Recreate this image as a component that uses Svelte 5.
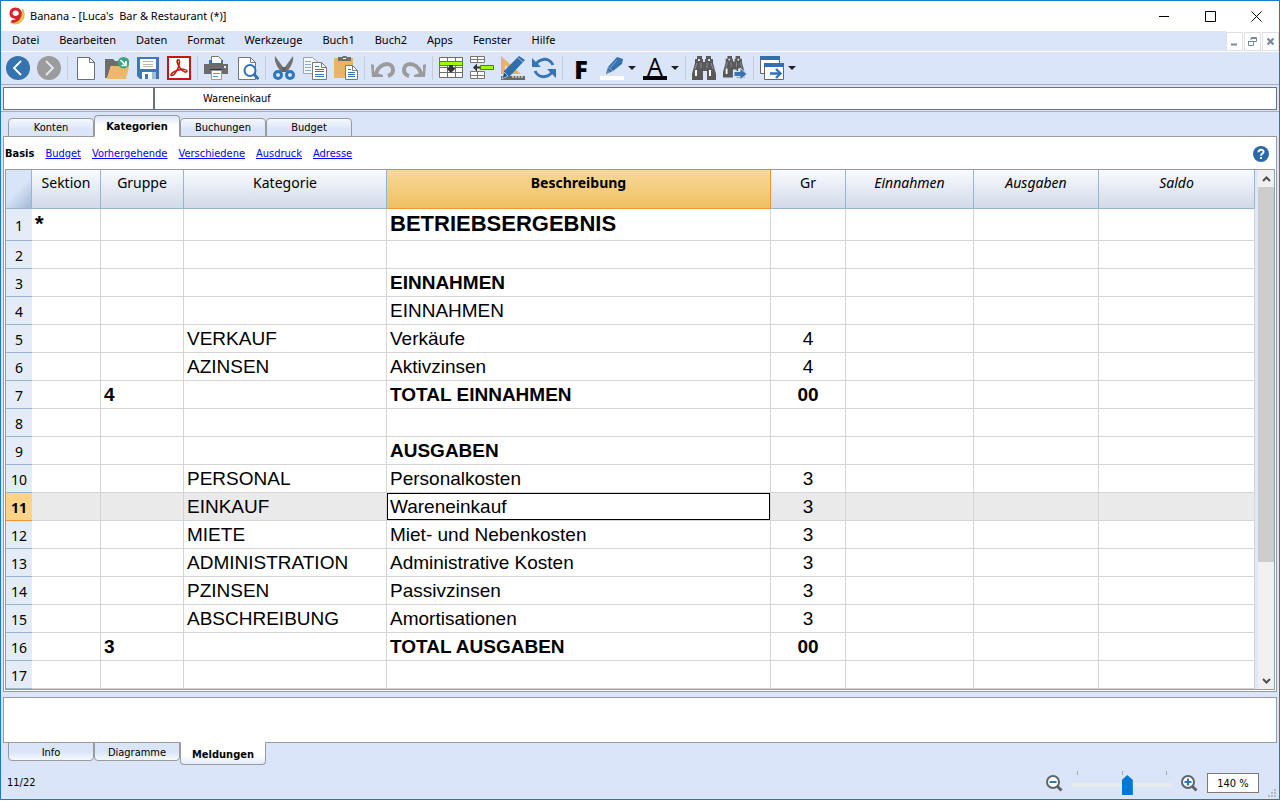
<script>
  const menus = ['Datei', 'Bearbeiten', 'Daten', 'Format', 'Werkzeuge', 'Buch1', 'Buch2', 'Apps', 'Fenster', 'Hilfe'];
  const sheets = ['Konten', 'Kategorien', 'Buchungen', 'Budget'];
  const views = ['Budget', 'Vorhergehende', 'Verschiedene', 'Ausdruck', 'Adresse'];
  const panels = ['Info', 'Diagramme', 'Meldungen'];
  const tools = [
    { id: 'back', label: 'Zurück' }, { id: 'forward', label: 'Vorwärts' }, null,
    { id: 'new', label: 'Neu' }, { id: 'open', label: 'Öffnen' }, { id: 'save', label: 'Speichern' }, { id: 'pdf', label: 'PDF erstellen' }, null,
    { id: 'print', label: 'Drucken' }, { id: 'preview', label: 'Vorschau' }, null,
    { id: 'cut', label: 'Ausschneiden' }, { id: 'copy', label: 'Kopieren' }, { id: 'paste', label: 'Einfügen' }, null,
    { id: 'undo', label: 'Rückgängig' }, { id: 'redo', label: 'Wiederherstellen' }, null,
    { id: 'addrow', label: 'Zeilen hinzufügen' }, { id: 'delrow', label: 'Zeilen löschen' }, { id: 'design', label: 'Spalten einrichten' }, { id: 'refresh', label: 'Neu berechnen' }, null,
    { id: 'bold', label: 'Fett' }, { id: 'marker', label: 'Hintergrundfarbe', menu: true }, { id: 'color', label: 'Schriftfarbe', menu: true }, null,
    { id: 'find', label: 'Suchen' }, { id: 'findnext', label: 'Weitersuchen' }, null,
    { id: 'windows', label: 'Fenster wechseln', menu: true }
  ];
  const columns = [
    { name: 'Sektion', cls: 'c-sec' }, { name: 'Gruppe', cls: 'c-grp' }, { name: 'Kategorie', cls: 'c-cat' },
    { name: 'Beschreibung', cls: 'c-desc', current: true }, { name: 'Gr', cls: 'c-gr' },
    { name: 'Einnahmen', cls: 'c-in', amount: true }, { name: 'Ausgaben', cls: 'c-out', amount: true }, { name: 'Saldo', cls: 'c-bal', amount: true }
  ];
  const rows = [
    { sec: '*', desc: 'BETRIEBSERGEBNIS', style: 'title' },
    {},
    { desc: 'EINNAHMEN', style: 'bold' },
    { desc: 'EINNAHMEN' },
    { cat: 'VERKAUF', desc: 'Verkäufe', gr: '4' },
    { cat: 'AZINSEN', desc: 'Aktivzinsen', gr: '4' },
    { grp: '4', desc: 'TOTAL EINNAHMEN', gr: '00', style: 'bold' },
    {},
    { desc: 'AUSGABEN', style: 'bold' },
    { cat: 'PERSONAL', desc: 'Personalkosten', gr: '3' },
    { cat: 'EINKAUF', desc: 'Wareneinkauf', gr: '3', style: 'current' },
    { cat: 'MIETE', desc: 'Miet- und Nebenkosten', gr: '3' },
    { cat: 'ADMINISTRATION', desc: 'Administrative Kosten', gr: '3' },
    { cat: 'PZINSEN', desc: 'Passivzinsen', gr: '3' },
    { cat: 'ABSCHREIBUNG', desc: 'Amortisationen', gr: '3' },
    { grp: '3', desc: 'TOTAL AUSGABEN', gr: '00', style: 'bold' },
    {}
  ];
  let zoom = $state(140);
</script>

{#snippet binoculars()}
  <path d="M5 0h5v3h1v3h2V3h1V0h5v3h2v4l3 11v6h-9v-9h-3v0h-1v9H0v-6L3 7V3h2z" fill="#595959" />
  <path d="M6 3h2v2H6zM16 3h2v2h-2z" fill="#dbe5f8" />
  <path d="M5 7l-2 6M9 7v5M15 7v5M19 7l2 6" stroke="#8d929b" stroke-width="1" />
  <path d="M4 14v6M18 14v6" stroke="#fff" stroke-width="2" />
{/snippet}

{#snippet icon(id)}
  <svg width="24" height="24" viewBox="0 0 24 24" fill="none" aria-hidden="true">
    {#if id === 'back'}
      <circle cx="12" cy="12" r="12" fill="#3572b0" />
      <path d="M15 5l-7 7 7 7" stroke="#fff" stroke-width="1.8" />
    {:else if id === 'forward'}
      <circle cx="12" cy="12" r="12" fill="#9c9c9c" />
      <path d="M9 5l7 7-7 7" stroke="#e4eaf5" stroke-width="1.8" />
    {:else if id === 'new'}
      <path d="M3.5 1.5h12l5 5v17h-17z" fill="#fff" stroke="#6e6e6e" />
      <path d="M15.5 1.5v5h5" stroke="#6e6e6e" />
    {:else if id === 'open'}
      <path d="M0 22V3h8l2 2h5v6H6L2 22z" fill="#6d6d6d" />
      <path d="M2 23L5.5 10h8l2-2h8.5v3l-3 12z" fill="#eeb76a" />
      <circle cx="18.5" cy="6.7" r="5.8" fill="#37a57d" />
      <path d="M15.5 4l5 5M21 5v4.5h-4.5" stroke="#fff" stroke-width="1.7" />
    {:else if id === 'save'}
      <path d="M1 1h22v22H4l-3-3z" fill="#3d79ba" />
      <path d="M4 3h16v10H4z" fill="#fff" />
      <path d="M7 5.5h10M7 8.5h10M7 10.5h10" stroke="#b7b7b7" />
      <path d="M6 16h14v7H6z" fill="#fff" />
      <path d="M9 18h3v5H9z" fill="#3d79ba" /><path d="M16 16h4v7h-4z" fill="#9fbddd" />
    {:else if id === 'pdf'}
      <path d="M1 1h22v22H1z" fill="#fff" stroke="#c5160f" stroke-width="2" />
      <path d="M10.5 4c3-1 2 4 1 7-2 5-5 8.500-7 8.500-2-1 2-4 7-5.500 4-1 8-1 8.500 1 0 2-4 1-7-3-2-3-3.500-7-2.500-8z" stroke="#c5160f" stroke-width="1.5" />
    {:else if id === 'print'}
      <path d="M7.500.5h7l3 3v5h-10z" fill="#fff" stroke="#777" />
      <path d="M5 4h3v3h10V4h1v5H5z" fill="#3575b5" />
      <path d="M0 8h24v10H0z" fill="#6b6b6b" />
      <path d="M20 10h2v2h-2z" fill="#eee" /><path d="M6 13h12v1H6z" fill="#333" />
      <path d="M7.500 14.500h10v9h-10z" fill="#fff" stroke="#999" />
      <path d="M9 17.500h7M9 20.500h5" stroke="#5a96cf" />
    {:else if id === 'preview'}
      <path d="M3.500 1.500h12l5 5v17h-17z" fill="#fff" stroke="#777" />
      <path d="M15.500 1.500v5h5" stroke="#777" />
      <circle cx="15" cy="14.500" r="5.500" fill="#fff" stroke="#2e73b7" stroke-width="2" />
      <path d="M19 18.500l4.500 4.500" stroke="#2e73b7" stroke-width="3" />
    {:else if id === 'cut'}
      <path d="M3 0l8 11 0 4-2 1C5 11 2 5 3 0zM21 0l-8 11 0 4 2 1c4-5 7-11 6-16z" fill="#727272" />
      <path d="M10 11h4v5h-4z" fill="#636363" />
      <circle cx="6" cy="19" r="3.500" stroke="#2c76bc" stroke-width="3" /><circle cx="18" cy="19" r="3.500" stroke="#2c76bc" stroke-width="3" />
    {:else if id === 'copy'}
      <path d="M.5 1.500h9l5 4v12H.5z" fill="#f4f7fc" stroke="#a4a4a4" />
      <path d="M2 5.500h6M2 8.500h6M2 11.500h6M2 14.500h6" stroke="#85acd5" />
      <path d="M9.500 6.500h9l5 5v12h-14z" fill="#fff" stroke="#777" /><path d="M18.500 6.500v5h5" stroke="#777" />
      <path d="M12 10.500h4M12 13.500h9M12 15.500h9M12 18.500h9M12 20.500h9" stroke="#3575b5" />
    {:else if id === 'paste'}
      <path d="M0 2h19v20H0z" fill="#e9b466" /><path d="M4 1h4l1-1h3l1 1h4v4H4z" fill="#6e6e6e" /><path d="M9 2h3v1H9z" fill="#fff" />
      <path d="M11.500 9.500h7l5 5v9h-12z" fill="#fff" stroke="#777" /><path d="M18.500 9.500v5h5" stroke="#777" />
      <path d="M14 13.500h3M14 16.500h7M14 18.500h7M14 20.500h7" stroke="#3575b5" />
    {:else if id === 'undo' || id === 'redo'}
      <g transform={id === 'redo' ? 'matrix(-1 0 0 1 24 0)' : undefined}>
        <path d="M5 17C7 11 12 8 16 8c4 0 6 3 6 6s-2 5-5 6" stroke="#9b9b9b" stroke-width="4" />
        <path d="M0 8l3 1v7l9 3v2H1z" fill="#9b9b9b" />
      </g>
    {:else if id === 'addrow'}
      <path d="M.5 1.500h23v20H.5z" fill="#fff" stroke="#6e6e66" />
      <path d="M8.500 1v21M16.500 1v21M1 11.500h23M1 16.500h23" stroke="#6e6e66" />
      <path d="M.5 5.500h23v4H.5z" fill="#9cff00" stroke="#568d00" />
      <path d="M10 9h4v3h2v1l-4 4-4-4v-1h2z" fill="#333" />
    {:else if id === 'delrow'}
      <path d="M.5.5h14v6H.5zM.5 15.500h14v7H.5z" fill="#fff" stroke="#77776d" /><path d="M7.500 0v7M7.500 15v8M1 3.500h13M1 19.500h13" stroke="#77776d" />
      <path d="M10.500 9.500h13v4h-13z" fill="#9cff00" stroke="#517c0c" /><path d="M3 11.500l4-4v3h3v2H7v3z" fill="#333" />
    {:else if id === 'design'}
      <path d="M0 0l20 18H0z" fill="#e7b36b" /><path d="M4 9l6 6H4z" fill="#dbe5f8" />
      <path d="M0 20h24v4H0z" fill="#686868" /><path d="M12 20v2M15 20v2M18 20v2M21 20v2" stroke="#fff" />
      <path d="M1 23l2-8L18 0l6 4L9 20z" fill="#2d6eae" /><path d="M1 23l2-7 4 4zM17 2l5 4" fill="#205184" stroke="#dbe5f8" stroke-width=".7" />
    {:else if id === 'refresh'}
      <path d="M3 11a9.500 9.500 0 0 1 18-2M21 13a9.500 9.500 0 0 1-18 2" stroke="#3575b5" stroke-width="3" />
      <path d="M0 2v9h9l-3-3-3-3zM24 22v-9h-9l3 3 3 3z" fill="#3575b5" />
    {:else if id === 'marker'}
      <path d="M6 18l2-7 9-10 6 2-1 5-9 7z" fill="#3572b0" /><path d="M8 11l5 4M17 4l-7 8" stroke="#7aa8d4" /><path d="M6 18l1-4 3 2z" fill="#888" />
      <path d="M0 20h24v4H0z" fill="#fff" />
    {:else if id === 'find'}
      {@render binoculars()}
    {:else if id === 'findnext'}
      <g transform="scale(.9)">{@render binoculars()}</g>
      <path d="M11 15.500h6V12l7 6-7 6v-3.500h-6z" fill="#3575b5" stroke="#dbe5f8" />
    {:else if id === 'windows'}
      <path d="M.5.5h19v17H.5z" fill="#fff" stroke="#666" /><path d="M0 0h20v4H0z" fill="#2e70b1" />
      <path d="M4.500 7.500h19v16h-19z" fill="#fff" stroke="#666" /><path d="M4 7h20v4H4z" fill="#2e70b1" />
      <path d="M10 17.500h10M16 13l4.500 4.500L16 22" stroke="#3575b5" stroke-width="2.400" />
    {/if}
  </svg>
{/snippet}

{#snippet magnifier(plus)}
  <svg width="17" height="17" viewBox="0 0 17 17" fill="none" aria-hidden="true">
    <circle cx="7" cy="7" r="6" fill="#fff" stroke="#5f6368" stroke-width="2" />
    <path d="M11.500 11.500l4 4" stroke="#5f6368" stroke-width="3" />
    <path d={plus ? 'M3.500 7h7M7 3.500v7' : 'M3.500 7h7'} stroke="#3575b5" stroke-width="2" />
  </svg>
{/snippet}

<div class="window">
  <header class="titlebar">
    <svg class="logo" width="16" height="18" viewBox="0 0 16 18" fill="none" aria-hidden="true">
      <path d="M13.500 2c4 6 1 14-7 15-2 0-4-1-5-2 7 0 11-5 12-13z" fill="#f2cf43" stroke="#a88a2b" stroke-width=".5" />
      <path d="M10.500 9C7 12 2 10 2 6.500 2 3.500 4 2 6.500 2c4 0 5.500 3 4.500 6.500-1 4-3.500 6-8.500 6" stroke="#d8202a" stroke-width="3" />
    </svg>
    <h1>Banana - [Luca's&nbsp; Bar &amp; Restaurant (*)]</h1>
    <div class="controls">
      <button aria-label="Minimieren"><svg width="11" height="11" viewBox="0 0 11 11"><path d="M0 5.500h10" stroke="#000" /></svg></button>
      <button aria-label="Maximieren"><svg width="11" height="11" viewBox="0 0 11 11"><path d="M.5.5h10v10h-10z" fill="none" stroke="#000" /></svg></button>
      <button aria-label="Schliessen"><svg width="11" height="11" viewBox="0 0 11 11"><path d="M.5.5l10 10M10.500.5l-10 10" stroke="#000" /></svg></button>
    </div>
  </header>

  <div class="menubar">
    <nav>
      {#each menus as menu}<button>{menu}</button>{/each}
    </nav>
    <div class="doc-controls">
      <button aria-label="Dokument minimieren"><svg width="9" height="9" viewBox="0 0 9 9"><path d="M1 7.500h6" stroke="#77889c" stroke-width="2" /></svg></button>
      <button aria-label="Dokument wiederherstellen"><svg width="9" height="9" viewBox="0 0 9 9" fill="none" stroke="#77889c"><path d="M3 .5h5.500v4H6M3 1.500h5M3 1v2M.5 4v4.500h5V4M0 4.500h6" /></svg></button>
      <button aria-label="Dokument schliessen"><svg width="9" height="9" viewBox="0 0 9 9"><path d="M1.500 1.500l6 6M7.500 1.500l-6 6" stroke="#77889c" stroke-width="2.200" /></svg></button>
    </div>
  </div>

  <div class="toolbar" role="toolbar">
    {#each tools as tool}
      {#if tool}
        <button class="tool" aria-label={tool.label}>
          {#if tool.id === 'bold'}<span class="letter heavy">F</span>
          {:else if tool.id === 'color'}<span class="letter underlined">A</span>
          {:else}{@render icon(tool.id)}{/if}
          {#if tool.menu}<i class="caret"></i>{/if}
        </button>
      {:else}
        <span class="separator"></span>
      {/if}
    {/each}
  </div>

  <div class="editbar">
    <input class="address" type="text" aria-label="Adresse" />
    <input class="formula" type="text" aria-label="Zelleninhalt" value="Wareneinkauf" />
  </div>

  <div class="tabs top">
    {#each sheets as sheet}<button class:active={sheet === 'Kategorien'}>{sheet}</button>{/each}
  </div>

  <main>
    <div class="views">
      <b>Basis</b>
      {#each views as view}<a href="#{view}">{view}</a>{/each}
      <button class="help" aria-label="Hilfe">
        <svg width="16" height="16" viewBox="0 0 16 16" fill="none" aria-hidden="true">
          <circle cx="8" cy="8" r="8" fill="#2868ab" />
          <path d="M5.500 6.200C5.500 2.800 10.600 3 10.600 5.800 10.600 7.600 8 7.600 8 9.800M8 11v2" stroke="#fff" stroke-width="2" />
        </svg>
      </button>
    </div>
    <div class="sheet">
      <table>
        <colgroup>
          <col class="c-num" />
          {#each columns as column}<col class={column.cls} />{/each}
        </colgroup>
        <thead>
          <tr>
            <th class="corner" aria-label="Alles auswählen"></th>
            {#each columns as column}
              <th scope="col" class:picked={column.current} class:amount={column.amount}>{column.name}</th>
            {/each}
          </tr>
        </thead>
        <tbody>
          {#each rows as row, i}
            <tr class={row.style}>
              <th scope="row">{i + 1}</th>
              <td>{row.sec ?? ''}</td>
              <td>{row.grp ?? ''}</td>
              <td>{row.cat ?? ''}</td>
              <td class="desc">{row.desc ?? ''}</td>
              <td class="center">{row.gr ?? ''}</td>
              <td></td>
              <td></td>
              <td></td>
            </tr>
          {/each}
        </tbody>
      </table>
      <div class="scrollbar">
        <button aria-label="Nach oben"><svg width="9" height="6" viewBox="0 0 9 6"><path d="M1 5l3.500-3.500L8 5" fill="none" stroke="#505050" stroke-width="2" /></svg></button>
        <div class="handle"></div>
        <div class="rest"></div>
        <button aria-label="Nach unten"><svg width="9" height="6" viewBox="0 0 9 6"><path d="M1 1l3.500 3.500L8 1" fill="none" stroke="#505050" stroke-width="2" /></svg></button>
      </div>
    </div>
  </main>

  <section class="messages" aria-label="Meldungen"></section>
  <div class="tabs bottom">
    {#each panels as panel}<button class:active={panel === 'Meldungen'}>{panel}</button>{/each}
  </div>

  <footer>
    <span class="position">11/22</span>
    <button class="zoom" aria-label="Verkleinern">{@render magnifier(false)}</button>
    <div class="slider">
      <div class="ticks"><i></i><i></i><i></i></div>
      <input type="range" min="0" max="250" aria-label="Zoom" bind:value={zoom} />
    </div>
    <button class="zoom" aria-label="Vergrössern">{@render magnifier(true)}</button>
    <input class="percent" type="text" aria-label="Zoom in Prozent" value="{zoom} %" />
    <svg class="grip" width="8" height="8" viewBox="0 0 8 8" fill="#b4b8c0" aria-hidden="true"><path d="M6 0h2v2H6zM3 3h2v2H3zM6 3h2v2H6zM0 6h2v2H0zM3 6h2v2H3zM6 6h2v2H6z" /></svg>
  </footer>
</div>

<style>
  :global(body) { margin: 0; background: #fff; }
  .window {
    --ui: 'Noto Sans', 'Open Sans', sans-serif;
    --small: 'DejaVu Sans Condensed', 'DejaVu Sans', sans-serif;
    box-sizing: border-box;
    min-height: calc(100vh - 1px);
    display: flex;
    flex-direction: column;
    border: 1px solid #1979ca;
    background: #dbe5f9;
    color: #000;
    font: 11px/14px var(--small);
  }
  .window *, .window *::before { box-sizing: border-box; }
  button { margin: 0; padding: 0; border: 0; background: none; color: inherit; font: inherit; }
  input { margin: 0; color: inherit; font: inherit; border-radius: 0; }
  svg { display: block; flex: none; }

  .titlebar { display: flex; align-items: center; height: 30px; padding-left: 8px; background: #fff; }
  h1 { margin: 0 0 0 5px; font: 400 11px/16px var(--ui); }
  .controls { display: flex; margin-left: auto; }
  .controls button { width: 46px; height: 30px; display: grid; place-items: center; }

  .menubar { display: flex; justify-content: space-between; height: 21px; border-bottom: 1px solid #fff; }
  nav { display: flex; align-items: center; gap: 20px; padding: 0 0 2px 11px; font: 11px/16px var(--ui); }
  .doc-controls { display: flex; gap: 1px; background: #fff; }
  .doc-controls button { width: 17px; height: 19px; margin-top: 1px; display: grid; place-items: center; border: 1px solid #e0e0e0; background: #fff; }

  .toolbar { display: flex; align-items: center; height: 33px; padding-left: 2px; border-bottom: 1px solid #a9aeb8; }
  .tool { display: flex; align-items: center; flex: none; height: 30px; padding: 0 4px 0 3px; }
  .separator { flex: none; width: 6px; height: 24px; border-left: 1px solid #c9ccd2; margin-left: 2px; margin-right: -2px; }
  .letter { width: 24px; height: 24px; font: 700 25px/24px 'Open Sans', sans-serif; text-align: center; }
  .underlined { font-weight: 400; border-bottom: 4px solid #000; line-height: 20px; }
  .heavy { font-weight: 800; line-height: 26px; }
  .caret { width: 8px; margin: 0 0 0 4px; border: 4px solid transparent; border-top-color: #222; border-bottom: 0; }

  .editbar { display: flex; margin-top: 1px; padding: 1px 2px; border-bottom: 1px solid #a9aeb8; }
  .editbar input { height: 23px; border: 1px solid #6d717a; background: #fff; outline: 0; }
  .address { width: 150px; flex: none; padding: 0 4px; }
  .formula { flex: 1; min-width: 0; padding: 0 48px; }
  .editbar .address { border-right-width: 0; }
  .editbar .formula { border-left-width: 2px; }

  .tabs { display: flex; padding-left: 7px; position: relative; }
  .tabs button { width: 86px; height: 19px; border: 1px solid #9a9a9a; background: linear-gradient(#f6f9ff, #dbe5f9 60%); }
  .tabs .active { height: 22px; font-weight: 700; background: #fff; }
  .top { height: 25px; padding-top: 3px; align-items: flex-end; margin-bottom: -1px; }
  .top button { border-bottom-color: #9a9a9a; border-radius: 4px 4px 0 0; }
  .top .active { padding-top: 2px; border-bottom-color: #fff; background: linear-gradient(#dce6f9, #fff 50%); }
  .bottom { height: 23px; align-items: flex-start; margin-top: -1px; }
  .bottom button { padding-top: 2px; border-radius: 0 0 4px 4px; background: linear-gradient(#dbe5f9 50%, #f6f9ff); }
  .bottom .active { height: 23px; border-top-color: #fff; background: linear-gradient(#fff 60%, #e3ebfa); }

  main { margin: 0 2px; padding: 0 1px 1px; border: 1px solid #9a9a9a; background: #fff; }
  .views { display: flex; align-items: center; gap: 11px; height: 32px; padding-top: 2px; }
  .views a { color: #00f; text-decoration: underline; }
  .help { margin: 0 6px 0 auto; }
  .sheet { display: flex; border: 1px solid #9a9a9a; }

  table { flex: 1; min-width: 0; width: 100%; table-layout: fixed; border-collapse: separate; border-spacing: 0; font: 19px/24px 'Liberation Sans', Arial, sans-serif; }
  .c-num { width: 26px; } .c-sec { width: 69px; } .c-grp { width: 83px; } .c-cat { width: 203px; }
  .c-gr { width: 75px; } .c-in { width: 128px; } .c-out { width: 125px; } .c-bal { width: 156px; }
  thead th { height: 39px; padding: 3px 0 0; vertical-align: top; font: 400 14px/20px var(--ui); background: linear-gradient(#f8fbfe, #d2dae9); border-right: 1px solid #9ab4d0; border-bottom: 1px solid #9ab4d0; }
  thead .corner { background: linear-gradient(135deg, #d8e4f8 50%, #a3b9d3); }
  thead .picked { font-weight: 700; background: linear-gradient(#f8d999, #efc062); border-color: #f19637; }
  thead .amount { font-style: italic; }
  tbody th { height: 28px; padding: 2px 0 0; font: 400 14px/20px var(--ui); background: #e4ecf8; border-bottom: 1px solid #9ab4d0; }
  td { height: 28px; padding: 0 3px; border-right: 1px solid #d5d5d5; border-bottom: 1px solid #d5d5d5; white-space: nowrap; overflow: hidden; }
  .center { text-align: center; }
  .bold td { font-weight: 700; }
  .title th, .title td { height: 32px; }
  .title td { padding-bottom: 2px; font-size: 22px; font-weight: 700; }
  .current td { background: #eaeaea; }
  .current th { font-weight: 700; background: #ffd387; border-bottom-color: #f19637; }
  .current .desc { background: #fff; box-shadow: inset 0 0 0 1px #000; }

  .scrollbar { display: flex; flex-direction: column; width: 19px; border-left: 3px solid #dfe8f8; background: #f0f0f0; }
  .scrollbar button { height: 17px; display: grid; place-items: center; }
  .handle { flex: 377; background: #cdcdcd; }
  .rest { flex: 110; }

  .messages { height: 46px; margin: 5px 2px 0; border: 1px solid #9a9a9a; background: #fff; }

  footer { display: flex; align-items: center; flex: 1; min-height: 34px; padding: 2px 3px 0 6px; }
  .position { margin-right: auto; }
  .zoom { margin: 0 9px; }
  .slider { width: 100px; height: 24px; }
  .ticks { display: flex; justify-content: space-between; padding: 0 5px; height: 4px; }
  .ticks i { width: 1px; background: #aaa898; }
  .slider input { display: block; width: 100%; height: 20px; appearance: none; background: linear-gradient(#e7eaea, #e7eaea) 0 8px / 100% 4px no-repeat; }
  .slider input::-webkit-slider-thumb { appearance: none; width: 11px; height: 20px; background: #0078d7; clip-path: polygon(50% 0, 100% 25%, 100% 100%, 0 100%, 0 25%); }
  .percent { width: 52px; height: 20px; padding: 0 4px; border: 1px solid #7a7a7a; background: #fff; text-align: center; }
  .grip { align-self: flex-end; margin: 0 0 2px 9px; }
</style>
